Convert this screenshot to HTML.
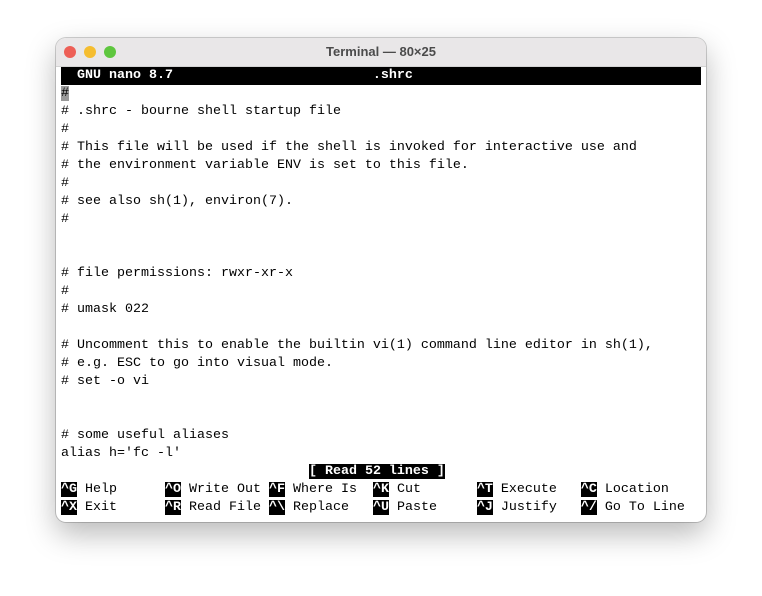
<!DOCTYPE html>
<html><head><style>
body{margin:0;width:762px;height:596px;background:#fff;position:relative;overflow:hidden;font-family:"Liberation Sans",sans-serif}
.win{position:absolute;left:56px;top:38px;width:650px;height:484px;border-radius:10px;background:#fff;box-shadow:0 12px 30px rgba(0,0,0,.28),0 0 0 1px rgba(0,0,0,.18);overflow:hidden}
.tb{height:28px;background:#e9e7e8;border-bottom:1px solid #d3d3d3;position:relative}
.tb .t{position:absolute;left:0;right:0;top:6px;text-align:center;font-weight:bold;font-size:13px;color:#4b4b4b}
.d{position:absolute;top:8px;width:12px;height:12px;border-radius:50%}
.term{position:absolute;left:5px;top:29px;font-family:"Liberation Mono",monospace;font-size:13.33px;line-height:18px;color:#000}
.r{height:18px;white-space:pre}
.inv{background:#000;color:#fff;font-weight:bold}
.cur{background:#999}
</style></head><body>
<div class="win">
<div class="tb"><div class="d" style="left:8px;background:#ed5f56"></div><div class="d" style="left:28px;background:#f5bd2f"></div><div class="d" style="left:48px;background:#5ec63e"></div><div class="t">Terminal — 80×25</div></div>
<div class="term">
<div class="r inv" style="width:640px">  GNU nano 8.7                         .shrc</div>
<div class="r"><span class="cur">#</span></div>
<div class="r"># .shrc - bourne shell startup file</div>
<div class="r">#</div>
<div class="r"># This file will be used if the shell is invoked for interactive use and</div>
<div class="r"># the environment variable ENV is set to this file.</div>
<div class="r">#</div>
<div class="r"># see also sh(1), environ(7).</div>
<div class="r">#</div>
<div class="r"></div>
<div class="r"></div>
<div class="r"># file permissions: rwxr-xr-x</div>
<div class="r">#</div>
<div class="r"># umask 022</div>
<div class="r"></div>
<div class="r"># Uncomment this to enable the builtin vi(1) command line editor in sh(1),</div>
<div class="r"># e.g. ESC to go into visual mode.</div>
<div class="r"># set -o vi</div>
<div class="r"></div>
<div class="r"></div>
<div class="r"># some useful aliases</div>
<div class="r">alias h='fc -l'</div>
<div class="r">                               <span class="inv">[ Read 52 lines ]</span></div>
<div class="r"><span class="inv">^G</span> Help      <span class="inv">^O</span> Write Out <span class="inv">^F</span> Where Is  <span class="inv">^K</span> Cut       <span class="inv">^T</span> Execute   <span class="inv">^C</span> Location</div>
<div class="r"><span class="inv">^X</span> Exit      <span class="inv">^R</span> Read File <span class="inv">^\</span> Replace   <span class="inv">^U</span> Paste     <span class="inv">^J</span> Justify   <span class="inv">^/</span> Go To Line</div>
</div>
</div>
</body></html>
